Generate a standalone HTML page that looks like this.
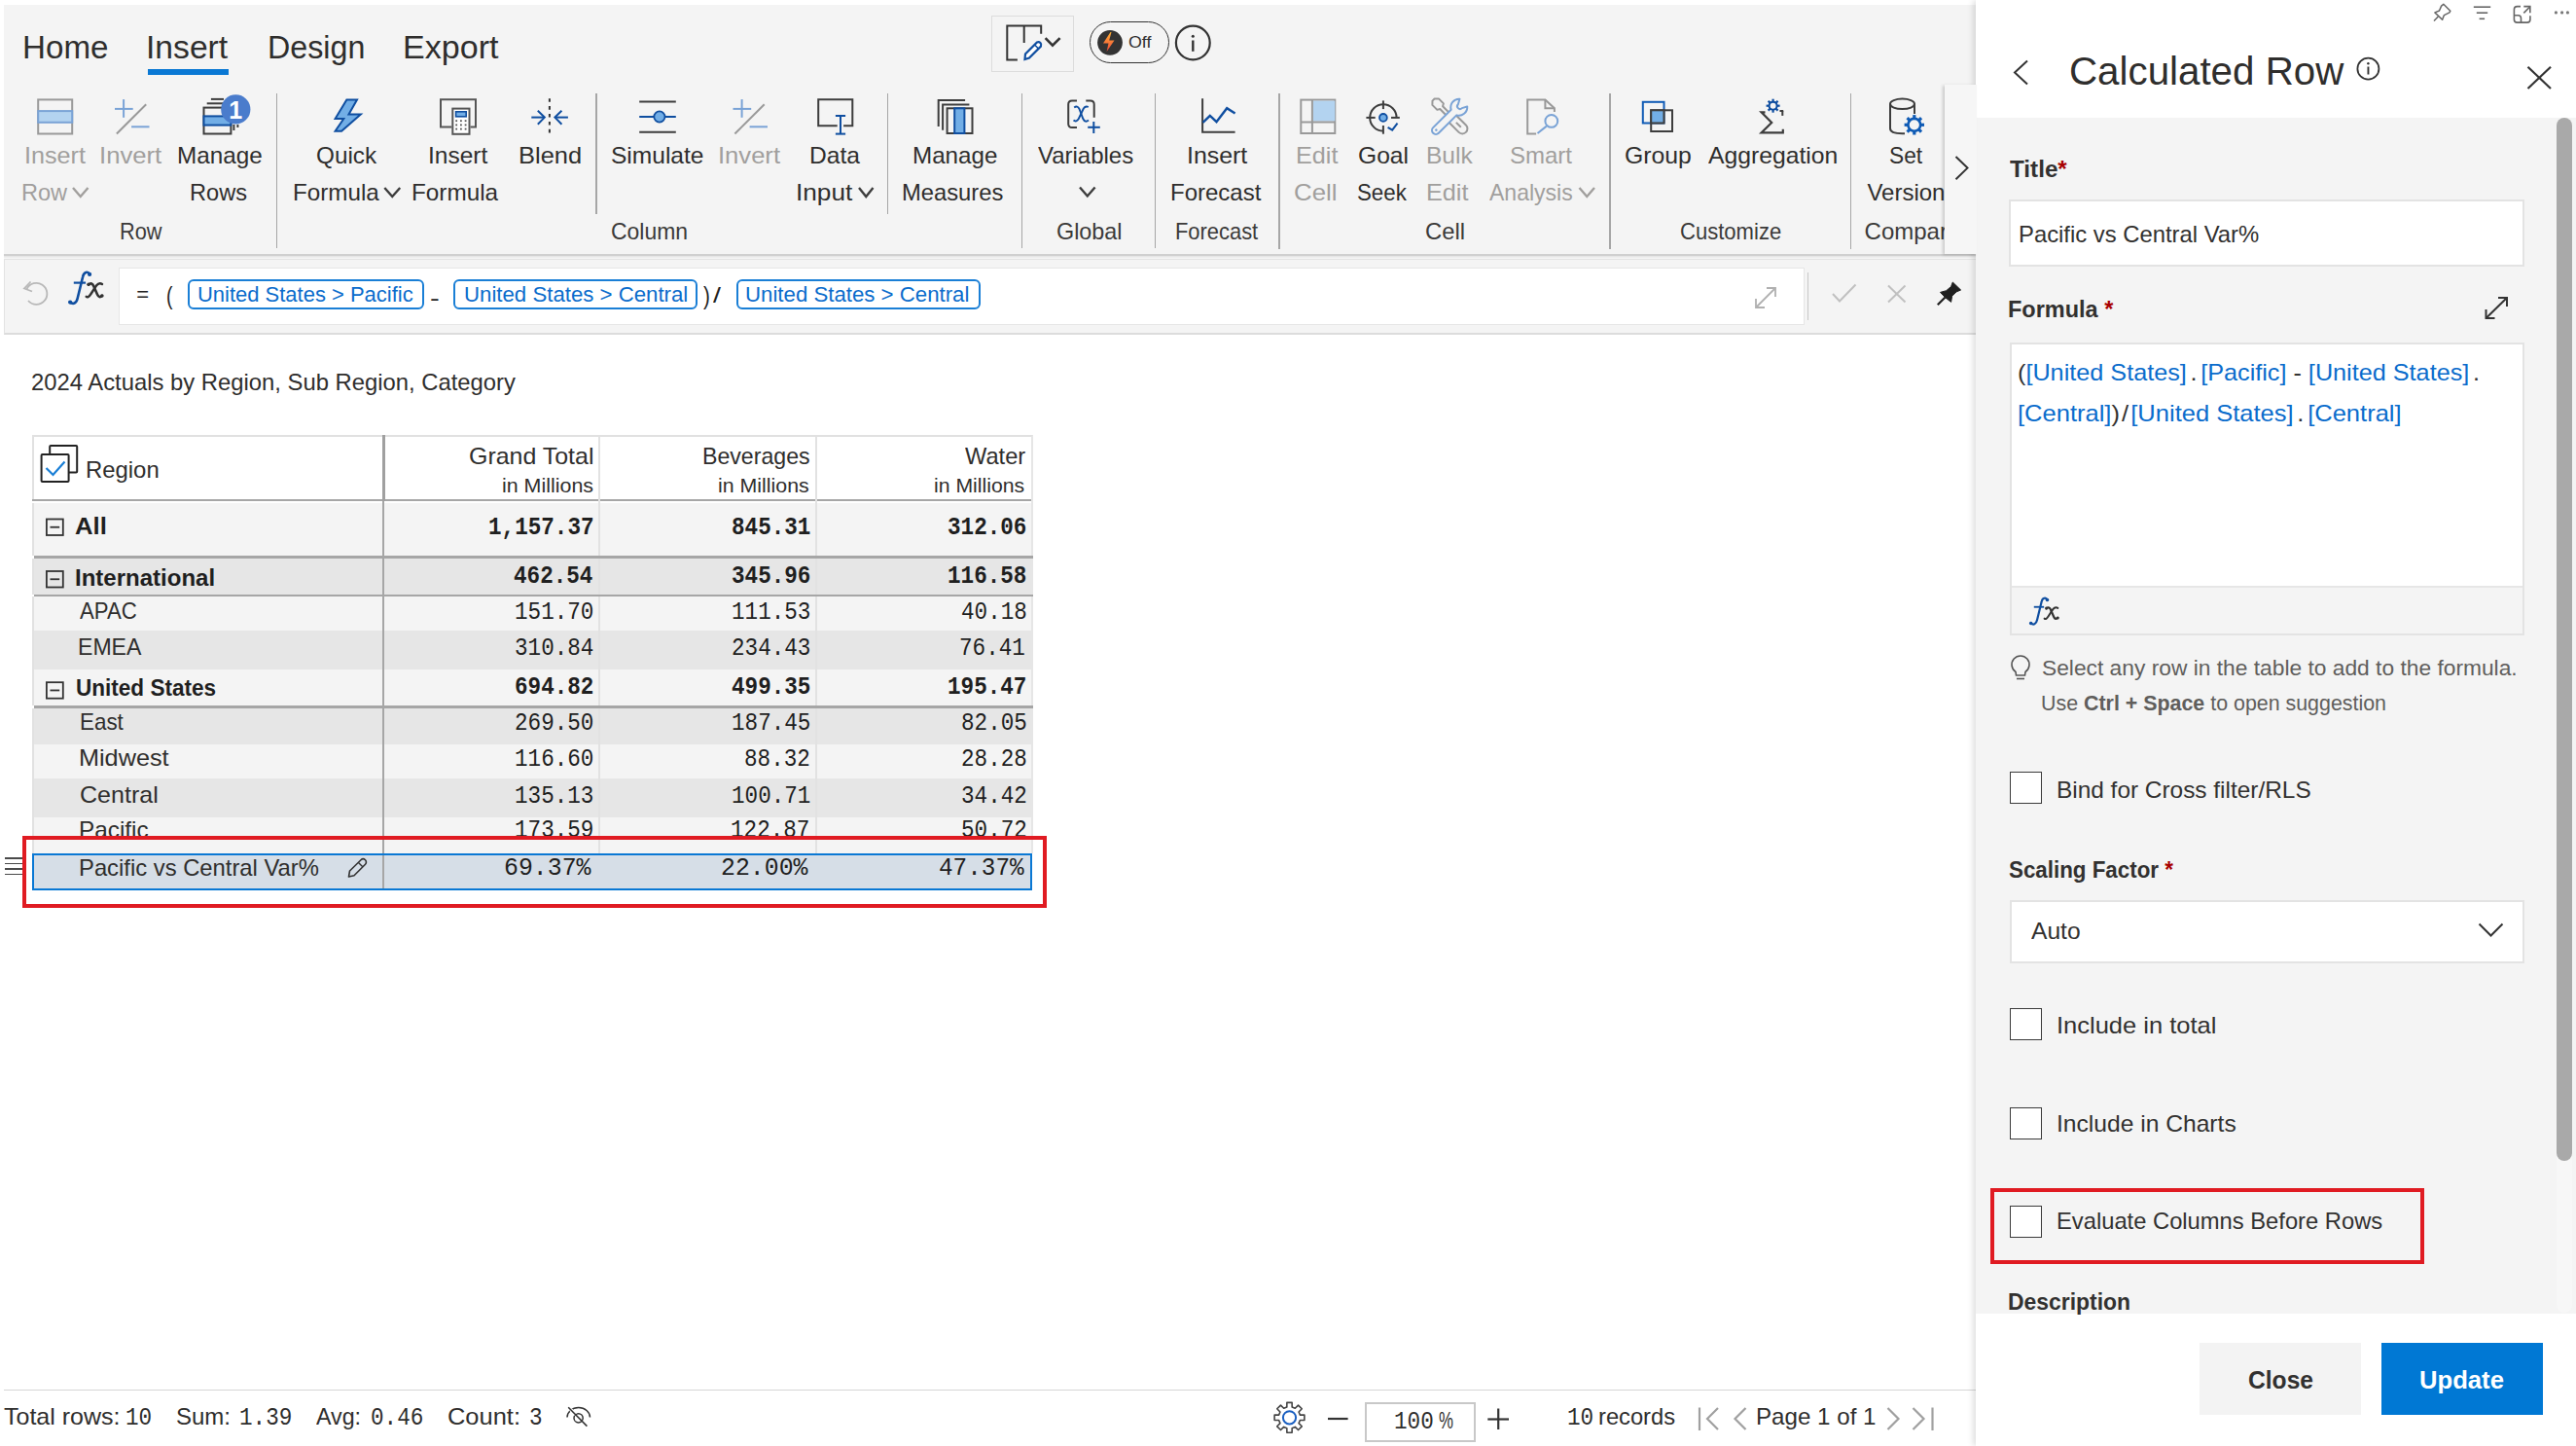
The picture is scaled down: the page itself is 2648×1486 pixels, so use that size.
<!DOCTYPE html>
<html><head><meta charset="utf-8"><title>Calculated Row</title>
<style>
html,body{margin:0;padding:0;width:2648px;height:1486px;overflow:hidden;background:#fff;position:relative;font-family:"Liberation Sans",sans-serif}
.t{position:absolute;white-space:nowrap;line-height:1;transform-origin:0 0}
svg{overflow:visible}
</style></head><body>
<div style="position:absolute;left:4px;top:5px;width:2028px;height:256px;background:#f4f4f4;"></div>
<div style="position:absolute;left:4px;top:261px;width:2028px;height:2px;background:#d0d0d0;"></div>
<div style="position:absolute;left:4px;top:263px;width:2028px;height:3px;background:linear-gradient(#e2e2e2,#fafafa);"></div>
<div style="position:absolute;left:4px;top:266px;width:2028px;height:78px;background:#f4f4f4;box-sizing:border-box;border:1px solid #e3e3e3;border-bottom:2px solid #dcdcdc"></div>
<div style="position:absolute;left:122px;top:275px;width:1733px;height:59px;background:#fff;box-sizing:border-box;border:1px solid #e6e6e6"></div>
<div style="position:absolute;left:1858px;top:280px;width:1px;height:49px;background:#c8c8c8;"></div>
<div style="position:absolute;left:4px;top:1428px;width:2027px;height:1px;background:#d6d6d6;"></div>
<div style="position:absolute;left:33px;top:447px;width:1029px;height:68px;background:#fff;box-sizing:border-box;border-top:2px solid #e1e1e1;border-left:2px solid #e1e1e1;border-right:2px solid #e8e8e8"></div>
<div style="position:absolute;left:33px;top:513.1px;width:1029px;height:2.4px;background:#a6a6a6;"></div>
<div style="position:absolute;left:33px;top:517.3px;width:1029px;height:53.90000000000009px;background:#f4f4f4;box-sizing:border-box;border-left:2px solid #e1e1e1"></div>
<div style="position:absolute;left:33px;top:573.8px;width:1029px;height:36.80000000000007px;background:#e6e6e6;box-sizing:border-box;border-left:2px solid #e1e1e1"></div>
<div style="position:absolute;left:33px;top:613.1px;width:1029px;height:35.19999999999993px;background:#f4f4f4;box-sizing:border-box;border-left:2px solid #e1e1e1"></div>
<div style="position:absolute;left:33px;top:648.3px;width:1029px;height:39.700000000000045px;background:#e6e6e6;box-sizing:border-box;border-left:2px solid #e1e1e1"></div>
<div style="position:absolute;left:33px;top:688px;width:1029px;height:37px;background:#f4f4f4;box-sizing:border-box;border-left:2px solid #e1e1e1"></div>
<div style="position:absolute;left:33px;top:727.5px;width:1029px;height:37.10000000000002px;background:#e6e6e6;box-sizing:border-box;border-left:2px solid #e1e1e1"></div>
<div style="position:absolute;left:33px;top:764.6px;width:1029px;height:35.39999999999998px;background:#f4f4f4;box-sizing:border-box;border-left:2px solid #e1e1e1"></div>
<div style="position:absolute;left:33px;top:800px;width:1029px;height:39.799999999999955px;background:#e6e6e6;box-sizing:border-box;border-left:2px solid #e1e1e1"></div>
<div style="position:absolute;left:33px;top:839.8px;width:1029px;height:37.200000000000045px;background:#f4f4f4;box-sizing:border-box;border-left:2px solid #e1e1e1"></div>
<div style="position:absolute;left:393px;top:447px;width:2.5px;height:68px;background:#a0a0a0;"></div>
<div style="position:absolute;left:393.2px;top:515px;width:1.8px;height:362px;background:#a6a6a6;"></div>
<div style="position:absolute;left:615px;top:449px;width:1.5px;height:428px;background:#e2e2e2;"></div>
<div style="position:absolute;left:838px;top:449px;width:1.5px;height:428px;background:#e2e2e2;"></div>
<div style="position:absolute;left:1060px;top:449px;width:2px;height:428px;background:#e6e6e6;"></div>
<div style="position:absolute;left:35px;top:571.2px;width:1027px;height:2.6px;background:#a6a6a6;"></div>
<div style="position:absolute;left:35px;top:610.6px;width:1027px;height:2.6px;background:#a6a6a6;"></div>
<div style="position:absolute;left:35px;top:725px;width:1027px;height:2.6px;background:#a6a6a6;"></div>
<div style="position:absolute;left:5px;top:881.2px;width:18px;height:1.4px;background:#4a4a4a;"></div>
<div style="position:absolute;left:5px;top:886.7px;width:18px;height:1.4px;background:#4a4a4a;"></div>
<div style="position:absolute;left:5px;top:892.2px;width:18px;height:1.4px;background:#4a4a4a;"></div>
<div style="position:absolute;left:5px;top:897.7px;width:18px;height:1.4px;background:#4a4a4a;"></div>
<div style="position:absolute;left:2031px;top:0px;width:617px;height:1486px;background:#fff;box-shadow:-3px 0 6px rgba(0,0,0,0.12)"></div>
<div style="position:absolute;left:2031px;top:121px;width:617px;height:1229px;background:#f4f4f4;"></div>
<div style="position:absolute;left:2628px;top:121px;width:16px;height:1228px;background:#f7f7f7;border-radius:8px"></div>
<div style="position:absolute;left:2628px;top:121px;width:16px;height:1072px;background:#a9a9a9;border-radius:8px"></div>
<div style="position:absolute;left:2065px;top:205px;width:530px;height:69px;background:#fff;box-sizing:border-box;border:2px solid #e3e3e3"></div>
<div style="position:absolute;left:2066px;top:351.5px;width:529px;height:301px;background:#fff;box-sizing:border-box;border:2px solid #e3e3e3"></div>
<div style="position:absolute;left:2068px;top:602px;width:525px;height:48.5px;background:#f4f4f4;box-sizing:border-box;border-top:2px solid #e6e6e6"></div>
<div style="position:absolute;left:2066px;top:793px;width:33px;height:33px;background:#fff;box-sizing:border-box;border:1.7px solid #3b3b3b"></div>
<div style="position:absolute;left:2066px;top:1036px;width:33px;height:33px;background:#fff;box-sizing:border-box;border:1.7px solid #3b3b3b"></div>
<div style="position:absolute;left:2066px;top:1137.5px;width:33px;height:33px;background:#fff;box-sizing:border-box;border:1.7px solid #3b3b3b"></div>
<div style="position:absolute;left:2066px;top:1238.5px;width:33px;height:33px;background:#fff;box-sizing:border-box;border:1.7px solid #3b3b3b"></div>
<div style="position:absolute;left:2066px;top:924.5px;width:528.5px;height:65px;background:#fff;box-sizing:border-box;border:2px solid #e3e3e3"></div>
<div style="position:absolute;left:2045.5px;top:1220.5px;width:446px;height:78.5px;background:transparent;box-sizing:border-box;border:4px solid #e01b22"></div>
<div style="position:absolute;left:2261px;top:1379.5px;width:166px;height:74px;background:#f3f3f3;"></div>
<div style="position:absolute;left:2448px;top:1379.5px;width:166px;height:74px;background:#0078d4;"></div>
<div style="position:absolute;left:1403px;top:1440.5px;width:114px;height:41px;background:#fff;box-sizing:border-box;border:2px solid #c8c8c8"></div>
<div style="position:absolute;left:1018.5px;top:16px;width:85px;height:57.5px;background:transparent;box-sizing:border-box;border:1.5px solid #dcdcdc"></div>
<div style="position:absolute;left:1119.5px;top:21.8px;width:82.2px;height:43.7px;background:transparent;box-sizing:border-box;border:1.6px solid #333;border-radius:23px"></div>
<div style="position:absolute;left:193px;top:286.5px;width:242.5px;height:31px;background:#fff;box-sizing:border-box;border:2px solid #1a7fd6;border-radius:6px"></div>
<div style="position:absolute;left:465.5px;top:286.5px;width:251.5px;height:31px;background:#fff;box-sizing:border-box;border:2px solid #1a7fd6;border-radius:6px"></div>
<div style="position:absolute;left:757px;top:286.5px;width:250.5px;height:31px;background:#fff;box-sizing:border-box;border:2px solid #1a7fd6;border-radius:6px"></div>
<div style="position:absolute;left:283.75px;top:96.4px;width:1.5px;height:158.6px;background:#a6a6a6;"></div>
<div style="position:absolute;left:612.05px;top:96.4px;width:1.5px;height:123.6px;background:#a6a6a6;"></div>
<div style="position:absolute;left:911.75px;top:96.4px;width:1.5px;height:123.6px;background:#a6a6a6;"></div>
<div style="position:absolute;left:1049.75px;top:96.4px;width:1.5px;height:158.6px;background:#a6a6a6;"></div>
<div style="position:absolute;left:1186.75px;top:96.4px;width:1.5px;height:158.6px;background:#a6a6a6;"></div>
<div style="position:absolute;left:1314.25px;top:96.4px;width:1.5px;height:159.6px;background:#a6a6a6;"></div>
<div style="position:absolute;left:1654.05px;top:96.4px;width:1.5px;height:159.6px;background:#a6a6a6;"></div>
<div style="position:absolute;left:1901.75px;top:96.4px;width:1.5px;height:159.6px;background:#a6a6a6;"></div>
<div style="position:absolute;left:152px;top:71px;width:83px;height:5.5px;background:#0a78d4;"></div>
<svg style="position:absolute;left:0;top:0" width="2648" height="1486" viewBox="0 0 2648 1486"><rect x="39.2" y="102.4" width="35" height="35.1" stroke="#999999" stroke-width="2" fill="none" rx="0"/><rect x="39.2" y="114.1" width="35" height="11.7" stroke="#7aa3d6" stroke-width="2" fill="#b3d3f0" rx="0"/><line x1="118" y1="111.9" x2="136.7" y2="111.9" stroke="#7aa3d6" stroke-width="2" stroke-linecap="butt"/><line x1="127.1" y1="102.1" x2="127.1" y2="120.8" stroke="#7aa3d6" stroke-width="2" stroke-linecap="butt"/><line x1="119.9" y1="137.5" x2="150.2" y2="107.2" stroke="#999999" stroke-width="2" stroke-linecap="butt"/><line x1="135.1" y1="130.3" x2="153.5" y2="130.3" stroke="#7aa3d6" stroke-width="2" stroke-linecap="butt"/><polyline points="216.9,101.9 230,101.9" stroke="#3d3d3d" stroke-width="2" fill="none" stroke-linejoin="miter" stroke-linecap="butt"/><polyline points="212.7,106.3 232,106.3" stroke="#3d3d3d" stroke-width="2" fill="none" stroke-linejoin="miter" stroke-linecap="butt"/><rect x="209.5" y="110.6" width="27.9" height="26.9" stroke="#3d3d3d" stroke-width="2" fill="none" rx="0"/><rect x="209.5" y="119.4" width="27.9" height="9.2" stroke="#0f4ea0" stroke-width="2" fill="#72aee6" rx="0"/><line x1="240.4" y1="128" x2="240.4" y2="134" stroke="#3d3d3d" stroke-width="2" stroke-linecap="butt"/><line x1="244.4" y1="128" x2="244.4" y2="131" stroke="#3d3d3d" stroke-width="2" stroke-linecap="butt"/><circle cx="242.3" cy="112.4" r="15.1" stroke="none" stroke-width="0" fill="#4a7ccc"/><text x="242.3" y="121.5" font-family="Liberation Sans" font-weight="bold" font-size="25" fill="#fff" text-anchor="middle">1</text><polygon points="356.4,102.6 367,102.6 358.5,117.6 370.8,117.6 351.1,134.8 344.6,134.8 353.3,122 344.6,122" stroke="#0f4ea0" stroke-width="2" fill="#72aee6" stroke-linejoin="miter" stroke-linecap="butt"/><polyline points="464.3,130.6 453,130.6 453,102.2 489,102.2 489,130.6 483.5,130.6" stroke="#555" stroke-width="2" fill="none" stroke-linejoin="miter" stroke-linecap="butt"/><rect x="465.3" y="111.6" width="17.2" height="26.2" stroke="#555" stroke-width="2" fill="#fff" rx="0"/><rect x="468.6" y="114.8" width="10.6" height="5" stroke="#0f4ea0" stroke-width="1.6" fill="#72aee6" rx="0"/><rect x="468.3" y="123.3" width="1.8" height="1.8" fill="#555"/><rect x="473.0" y="123.3" width="1.8" height="1.8" fill="#555"/><rect x="477.70000000000005" y="123.3" width="1.8" height="1.8" fill="#555"/><rect x="468.3" y="127.5" width="1.8" height="1.8" fill="#555"/><rect x="473.0" y="127.5" width="1.8" height="1.8" fill="#555"/><rect x="477.70000000000005" y="127.5" width="1.8" height="1.8" fill="#555"/><rect x="468.3" y="131.7" width="1.8" height="1.8" fill="#555"/><rect x="473.0" y="131.7" width="1.8" height="1.8" fill="#555"/><rect x="477.70000000000005" y="131.7" width="1.8" height="1.8" fill="#555"/><line x1="564.9" y1="101.2" x2="564.9" y2="138.5" stroke="#333" stroke-width="2" stroke-dasharray="3.6,4.3"/><line x1="546.3" y1="120.6" x2="559.5" y2="120.6" stroke="#0f4ea0" stroke-width="2" stroke-linecap="butt"/><polyline points="552.8,113.8 559.8,120.6 552.8,127.7" stroke="#0f4ea0" stroke-width="2" fill="none" stroke-linejoin="miter" stroke-linecap="butt"/><line x1="583.9" y1="120.6" x2="570.7" y2="120.6" stroke="#0f4ea0" stroke-width="2" stroke-linecap="butt"/><polyline points="577.4,113.8 570.4,120.6 577.4,127.7" stroke="#0f4ea0" stroke-width="2" fill="none" stroke-linejoin="miter" stroke-linecap="butt"/><line x1="657.2" y1="104.6" x2="694.8" y2="104.6" stroke="#3d3d3d" stroke-width="2" stroke-linecap="butt"/><line x1="657.2" y1="135.8" x2="694.8" y2="135.8" stroke="#3d3d3d" stroke-width="2" stroke-linecap="butt"/><line x1="657.2" y1="120" x2="694.8" y2="120" stroke="#0f4ea0" stroke-width="2" stroke-linecap="butt"/><circle cx="677.9" cy="120" r="5.6" stroke="#0f4ea0" stroke-width="1.8" fill="#72aee6"/><line x1="753.5" y1="111.9" x2="772.2" y2="111.9" stroke="#7aa3d6" stroke-width="2" stroke-linecap="butt"/><line x1="762.6" y1="102.1" x2="762.6" y2="120.8" stroke="#7aa3d6" stroke-width="2" stroke-linecap="butt"/><line x1="755.4" y1="137.5" x2="785.7" y2="107.2" stroke="#999999" stroke-width="2" stroke-linecap="butt"/><line x1="770.6" y1="130.3" x2="789" y2="130.3" stroke="#7aa3d6" stroke-width="2" stroke-linecap="butt"/><polyline points="860.7,129.3 841.2,129.3 841.2,102.2 876.3,102.2 876.3,129.3 867.1,129.3" stroke="#3d3d3d" stroke-width="2" fill="none" stroke-linejoin="miter" stroke-linecap="butt"/><line x1="864" y1="119.5" x2="864" y2="137.5" stroke="#0f4ea0" stroke-width="2" stroke-linecap="butt"/><line x1="858.9" y1="119" x2="869.1" y2="119" stroke="#0f4ea0" stroke-width="2" stroke-linecap="butt"/><line x1="858.9" y1="137.6" x2="869.1" y2="137.6" stroke="#0f4ea0" stroke-width="2" stroke-linecap="butt"/><polyline points="964.7,130 964.7,102.9 992.1,102.9" stroke="#3d3d3d" stroke-width="2" fill="none" stroke-linejoin="miter" stroke-linecap="butt"/><polyline points="969.1,133.8 969.1,107.6 996.4,107.6" stroke="#3d3d3d" stroke-width="2" fill="none" stroke-linejoin="miter" stroke-linecap="butt"/><rect x="973.6" y="111.3" width="25.9" height="25.7" stroke="#3d3d3d" stroke-width="2" fill="#f4f4f4" rx="0"/><rect x="981.2" y="111.3" width="10.2" height="25.7" stroke="#0f4ea0" stroke-width="2" fill="#72aee6" rx="0"/><path d="M1107,103.5 H1102 Q1098.2,103.5 1098.2,107.3 V127.2 Q1098.2,131 1102,131 H1107" stroke="#3d3d3d" stroke-width="2" fill="none" /><path d="M1116.3,103.5 H1120.9 Q1124.7,103.5 1124.7,107.3 V120.7" stroke="#3d3d3d" stroke-width="2" fill="none" /><path d="M1104.2,110.6 Q1107.5,108 1109.5,112 L1113.3,122 Q1115.5,126.5 1119,123.5" stroke="#0f4ea0" stroke-width="1.9" fill="none" /><path d="M1118.8,110 Q1115.8,108.6 1113.8,111.5 L1108.8,122 Q1106.5,126 1103.5,123.6" stroke="#0f4ea0" stroke-width="1.9" fill="none" /><line x1="1118.2" y1="130.8" x2="1130.8" y2="130.8" stroke="#0f4ea0" stroke-width="2" stroke-linecap="butt"/><line x1="1124.3" y1="125" x2="1124.3" y2="137" stroke="#0f4ea0" stroke-width="2" stroke-linecap="butt"/><polyline points="1110,192.5 1117.8,201.5 1125.6,192.5" stroke="#3d3d3d" stroke-width="2.4" fill="none" stroke-linejoin="miter" stroke-linecap="butt"/><polyline points="1236.1,101.2 1236.1,135.8 1269.6,135.8" stroke="#3d3d3d" stroke-width="2" fill="none" stroke-linejoin="miter" stroke-linecap="butt"/><polyline points="1236.6,125.9 1243.8,118.9 1250.5,125.2 1261.2,111.2 1269.6,116.6" stroke="#0f4ea0" stroke-width="2.4" fill="none" stroke-linejoin="miter" stroke-linecap="butt"/><rect x="1337.3" y="102.6" width="35" height="34.4" stroke="#999999" stroke-width="2" fill="none" rx="0"/><rect x="1349.9" y="103.6" width="22.4" height="20.9" fill="#b3d3f0"/><line x1="1348.9" y1="102.6" x2="1348.9" y2="137" stroke="#999999" stroke-width="2" stroke-linecap="butt"/><line x1="1337.3" y1="125.5" x2="1372.3" y2="125.5" stroke="#999999" stroke-width="2" stroke-linecap="butt"/><path d="M1421.9,107.2 A13.7,13.7 0 1 0 1421.9,134.6" stroke="#3d3d3d" stroke-width="2" fill="none" /><path d="M1421.9,107.2 A13.7,13.7 0 0 1 1435.6,120.9" stroke="#3d3d3d" stroke-width="2" fill="none" /><line x1="1421.9" y1="103.4" x2="1421.9" y2="112.1" stroke="#3d3d3d" stroke-width="2" stroke-linecap="butt"/><line x1="1404.4" y1="120.9" x2="1413.7" y2="120.9" stroke="#3d3d3d" stroke-width="2" stroke-linecap="butt"/><line x1="1430" y1="120.9" x2="1438.8" y2="120.9" stroke="#3d3d3d" stroke-width="2" stroke-linecap="butt"/><line x1="1421.9" y1="129" x2="1421.9" y2="137.7" stroke="#3d3d3d" stroke-width="2" stroke-linecap="butt"/><circle cx="1421.9" cy="120.9" r="3.9" stroke="#0f4ea0" stroke-width="1.8" fill="#72aee6"/><polyline points="1426.6,130.8 1431.2,133.7 1436.5,126.7" stroke="#0f4ea0" stroke-width="2" fill="none" stroke-linejoin="miter" stroke-linecap="butt"/><g transform="translate(1490.5,119.5) rotate(45)"><path d="M-1,-2 L-12.5,-2 L-14,-4.6 L-21,-4.6 L-24,-1.5 L-24,1.5 L-21,4.6 L-14,4.6 L-12.5,2 L-1,2" stroke="#999" stroke-width="2" fill="none" stroke-linejoin="round"/><path d="M3,-5.2 L18,-5.2 A5.2,5.2 0 0 1 18,5.2 L3,5.2 L-1,2" stroke="#999" stroke-width="2" fill="none" stroke-linejoin="round"/><line x1="9" y1="0" x2="16" y2="0" stroke="#999" stroke-width="2"/></g><g transform="translate(1490.5,119.5) rotate(-45)"><path d="M-20.5,-4 L5.6,-4 A8.6,8.6 0 0 1 19.6,-5.5 L14.6,-2.8 A2.8,2.8 0 0 0 14.6,2.8 L19.6,5.5 A8.6,8.6 0 0 1 5.6,4 L-20.5,4 A4,4 0 0 1 -20.5,-4 Z" stroke="#7aa3d6" stroke-width="2" fill="#f4f4f4" stroke-linejoin="round"/><circle cx="-20" cy="0" r="1.3" fill="#7aa3d6"/></g><polyline points="1579.1,137.5 1570.2,137.5 1570.2,102.6 1588.4,102.6 1597.9,111.2 1597.9,115" stroke="#999999" stroke-width="2" fill="none" stroke-linejoin="miter" stroke-linecap="butt"/><polyline points="1588.4,102.6 1588.4,111.2 1597.9,111.2" stroke="#999999" stroke-width="2" fill="none" stroke-linejoin="miter" stroke-linecap="butt"/><circle cx="1594.8" cy="124.4" r="6.4" stroke="#7aa3d6" stroke-width="2" fill="none"/><line x1="1589.8" y1="129.6" x2="1580.5" y2="137" stroke="#7aa3d6" stroke-width="2" stroke-linecap="butt"/><rect x="1688.8" y="104.8" width="21.7" height="21.7" stroke="#0f5bb5" stroke-width="2" fill="none" rx="0"/><rect x="1697.2" y="113.3" width="21.8" height="21.7" stroke="#3d3d3d" stroke-width="2" fill="none" rx="0"/><rect x="1697.2" y="113.3" width="13.3" height="13.2" fill="#72aee6" stroke="#3d3d3d" stroke-width="2"/><polyline points="1814.5,115.3 1810.6,115.3 1821.2,126.1 1810.6,136.4 1832.8,136.4 1832.8,132.7" stroke="#3d3d3d" stroke-width="2.2" fill="none" stroke-linejoin="miter" stroke-linecap="butt"/><line x1="1832.3" y1="114" x2="1832.3" y2="118.9" stroke="#3d3d3d" stroke-width="2" stroke-linecap="butt"/><line x1="1829.5" y1="114" x2="1833.2" y2="114" stroke="#3d3d3d" stroke-width="2" stroke-linecap="butt"/><circle cx="1822.6" cy="108.7" r="4.0" stroke="#0f4ea0" stroke-width="2" fill="none"/><line x1="1826.6" y1="108.7" x2="1829.6" y2="108.7" stroke="#0f4ea0" stroke-width="2.2" stroke-linecap="butt"/><line x1="1825.43" y1="111.53" x2="1827.55" y2="113.65" stroke="#0f4ea0" stroke-width="2.2" stroke-linecap="butt"/><line x1="1822.6" y1="112.7" x2="1822.6" y2="115.7" stroke="#0f4ea0" stroke-width="2.2" stroke-linecap="butt"/><line x1="1819.77" y1="111.53" x2="1817.65" y2="113.65" stroke="#0f4ea0" stroke-width="2.2" stroke-linecap="butt"/><line x1="1818.6" y1="108.7" x2="1815.6" y2="108.7" stroke="#0f4ea0" stroke-width="2.2" stroke-linecap="butt"/><line x1="1819.77" y1="105.87" x2="1817.65" y2="103.75" stroke="#0f4ea0" stroke-width="2.2" stroke-linecap="butt"/><line x1="1822.6" y1="104.7" x2="1822.6" y2="101.7" stroke="#0f4ea0" stroke-width="2.2" stroke-linecap="butt"/><line x1="1825.43" y1="105.87" x2="1827.55" y2="103.75" stroke="#0f4ea0" stroke-width="2.2" stroke-linecap="butt"/><ellipse cx="1955.5" cy="106.8" rx="12.5" ry="5.3" stroke="#3d3d3d" stroke-width="2" fill="none"/><path d="M1943,106.8 V132 Q1943,137.2 1955.5,137.2 H1958" stroke="#3d3d3d" stroke-width="2" fill="none" /><line x1="1968" y1="106.8" x2="1968" y2="117" stroke="#3d3d3d" stroke-width="2" stroke-linecap="butt"/><circle cx="1967.8" cy="128.3" r="6.4" stroke="#0f5bb5" stroke-width="2.6" fill="none"/><line x1="1974.2" y1="128.3" x2="1978.0" y2="128.3" stroke="#0f5bb5" stroke-width="3.2" stroke-linecap="butt"/><line x1="1972.33" y1="132.83" x2="1975.01" y2="135.51" stroke="#0f5bb5" stroke-width="3.2" stroke-linecap="butt"/><line x1="1967.8" y1="134.7" x2="1967.8" y2="138.5" stroke="#0f5bb5" stroke-width="3.2" stroke-linecap="butt"/><line x1="1963.27" y1="132.83" x2="1960.59" y2="135.51" stroke="#0f5bb5" stroke-width="3.2" stroke-linecap="butt"/><line x1="1961.4" y1="128.3" x2="1957.6" y2="128.3" stroke="#0f5bb5" stroke-width="3.2" stroke-linecap="butt"/><line x1="1963.27" y1="123.77" x2="1960.59" y2="121.09" stroke="#0f5bb5" stroke-width="3.2" stroke-linecap="butt"/><line x1="1967.8" y1="121.9" x2="1967.8" y2="118.1" stroke="#0f5bb5" stroke-width="3.2" stroke-linecap="butt"/><line x1="1972.33" y1="123.77" x2="1975.01" y2="121.09" stroke="#0f5bb5" stroke-width="3.2" stroke-linecap="butt"/><polyline points="75,193 82.75,202 90.5,193" stroke="#a19f9d" stroke-width="2.4" fill="none" stroke-linejoin="miter" stroke-linecap="butt"/><polyline points="395.3,193 403.25,202 411.2,193" stroke="#3d3d3d" stroke-width="2.4" fill="none" stroke-linejoin="miter" stroke-linecap="butt"/><polyline points="883,193 890.25,202 897.5,193" stroke="#3d3d3d" stroke-width="2.4" fill="none" stroke-linejoin="miter" stroke-linecap="butt"/><polyline points="1623.5,193 1631.25,202 1639,193" stroke="#a19f9d" stroke-width="2.4" fill="none" stroke-linejoin="miter" stroke-linecap="butt"/><polyline points="1045.9,61.5 1035.3,61.5 1035.3,26.5 1070.2,26.5 1070.2,34.7" stroke="#333" stroke-width="2" fill="none" stroke-linejoin="miter" stroke-linecap="butt"/><line x1="1052.7" y1="26.5" x2="1052.7" y2="44" stroke="#333" stroke-width="2" stroke-linecap="butt"/><path d="M1053.5,61 L1054,55.5 L1066,43.5 A3,3 0 0 1 1070,47.5 L1058,59.5 Z" stroke="#0f4ea0" stroke-width="2.2" fill="#fff" /><line x1="1063.5" y1="46" x2="1067.5" y2="50" stroke="#0f4ea0" stroke-width="1.6" stroke-linecap="butt"/><polyline points="1074.6,39.1 1082,46.6 1089.6,39.1" stroke="#333" stroke-width="2.6" fill="none" stroke-linejoin="miter" stroke-linecap="butt"/><circle cx="1141" cy="43.8" r="12.9" stroke="none" stroke-width="0" fill="#333"/><defs><linearGradient id="lg" x1="0" y1="0" x2="0" y2="1"><stop offset="0" stop-color="#ffb033"/><stop offset="1" stop-color="#f0483c"/></linearGradient></defs><polygon points="1141.5,33 1134,44.5 1139.5,44.5 1137.6,53 1145.5,41.5 1140.2,41.5 1142.5,33" stroke="none" stroke-width="0" fill="url(#lg)" stroke-linejoin="miter" stroke-linecap="butt"/><circle cx="1226.3" cy="44" r="17.4" stroke="#333" stroke-width="2.2" fill="none"/><rect x="1225.1" y="41.5" width="2.4" height="11.3" fill="#333"/><circle cx="1226.3" cy="37.2" r="1.5" fill="#333"/><path d="M27.5,297 A11,11 0 1 1 29,309" stroke="#b8b8b8" stroke-width="1.8" fill="none" /><polyline points="31.5,289.5 25,296.5 33,299.5" stroke="#b8b8b8" stroke-width="1.8" fill="none" stroke-linejoin="miter" stroke-linecap="butt"/><g transform="translate(69.5,279)"><path d="M22.6,3 C21,-0.6 16.5,0.2 15.6,5.5 L10.2,27.5 C9,33 5.5,34 2.5,31.5" stroke="#0f4ea0" stroke-width="2.6" fill="none" stroke-linecap="round"/><circle cx="22.6" cy="2.9" r="2.1" fill="#0f4ea0"/><circle cx="2.6" cy="31.6" r="2.1" fill="#0f4ea0"/><line x1="6.3" y1="11.6" x2="18.6" y2="11.6" stroke="#0f4ea0" stroke-width="2.2"/><path d="M21.5,13.6 Q25,10.5 27,15.5 L30.5,23.5 Q32.5,28 35.5,24.8" stroke="#333" stroke-width="2.6" fill="none" stroke-linecap="round"/><path d="M35.5,13 Q32.5,10.8 29.5,14.5 L24,23 Q21,27.5 19.2,25.8" stroke="#333" stroke-width="2.4" fill="none" stroke-linecap="round"/><circle cx="21.6" cy="13.2" r="1.8" fill="#333"/><circle cx="35.3" cy="25" r="1.8" fill="#333"/></g><line x1="1805" y1="316" x2="1825" y2="296" stroke="#b0b0b0" stroke-width="1.8" stroke-linecap="butt"/><polyline points="1805,307 1805,316 1814,316" stroke="#b0b0b0" stroke-width="1.8" fill="none" stroke-linejoin="miter" stroke-linecap="butt"/><polyline points="1816,296 1825,296 1825,305" stroke="#b0b0b0" stroke-width="1.8" fill="none" stroke-linejoin="miter" stroke-linecap="butt"/><polyline points="1884,302 1891,309.5 1907.5,292.5" stroke="#c0c0c0" stroke-width="2" fill="none" stroke-linejoin="miter" stroke-linecap="butt"/><line x1="1941" y1="293.5" x2="1958.5" y2="310.5" stroke="#c0c0c0" stroke-width="2" stroke-linecap="butt"/><line x1="1958.5" y1="293.5" x2="1941" y2="310.5" stroke="#c0c0c0" stroke-width="2" stroke-linecap="butt"/><polygon points="2007.3,290 2015.6,298 2011.1,299.9 2006.6,304.2 2005.6,310.4 1999.5,305.6 1994.5,300.4 2000.7,298.7 2005.6,294.5" fill="#1f1f1f" stroke="#1f1f1f" stroke-width="1" stroke-linejoin="round"/><line x1="1999.5" y1="305.5" x2="1991.8" y2="313.2" stroke="#1f1f1f" stroke-width="2.2" stroke-linecap="butt"/><polygon points="2511.8,4.3 2518.8,11.3 2517.9,12.9 2512.4,15.6 2510.6,20.2 2502.9,12.9 2507.5,11 2509.6,6.1" fill="none" stroke="#666" stroke-width="1.5" stroke-linejoin="round"/><line x1="2506.3" y1="16.9" x2="2502" y2="21.5" stroke="#666" stroke-width="1.5" stroke-linecap="butt"/><line x1="2542.8" y1="7.2" x2="2560.2" y2="7.2" stroke="#666" stroke-width="1.6" stroke-linecap="butt"/><line x1="2545.8" y1="13.2" x2="2557.2" y2="13.2" stroke="#666" stroke-width="1.6" stroke-linecap="butt"/><line x1="2548.6" y1="19.3" x2="2554.1" y2="19.3" stroke="#666" stroke-width="1.6" stroke-linecap="butt"/><path d="M2591,6.6 H2587.5 Q2584.4,6.6 2584.4,9.7 V20 Q2584.4,23.1 2587.5,23.1 H2597.8 Q2600.9,23.1 2600.9,20 V16.3" stroke="#666" stroke-width="1.6" fill="none" /><path d="M2584.4,15.8 H2588.5 Q2591.5,15.8 2591.5,18.8 V23.1" stroke="#666" stroke-width="1.6" fill="none" /><line x1="2594.3" y1="13.4" x2="2600.6" y2="7" stroke="#666" stroke-width="1.6" stroke-linecap="butt"/><polyline points="2594.3,6.6 2600.8,6.6 2600.8,13.2" stroke="#666" stroke-width="1.6" fill="none" stroke-linejoin="miter" stroke-linecap="butt"/><circle cx="2627.4" cy="12.9" r="1.6" stroke="none" stroke-width="0" fill="#777"/><circle cx="2633.6" cy="12.9" r="1.6" stroke="none" stroke-width="0" fill="#777"/><circle cx="2639.4" cy="12.9" r="1.6" stroke="none" stroke-width="0" fill="#777"/><polyline points="2084,62.5 2071,74.5 2084,86.5" stroke="#333" stroke-width="2" fill="none" stroke-linejoin="miter" stroke-linecap="butt"/><circle cx="2434.4" cy="70.7" r="11" stroke="#333" stroke-width="1.8" fill="none"/><rect x="2433.5" y="68.5" width="1.9" height="8" fill="#333"/><circle cx="2434.4" cy="65.2" r="1.2" fill="#333"/><line x1="2598.5" y1="68.8" x2="2622" y2="91" stroke="#333" stroke-width="2.2" stroke-linecap="butt"/><line x1="2622" y1="68.8" x2="2598.5" y2="91" stroke="#333" stroke-width="2.2" stroke-linecap="butt"/><line x1="2555.5" y1="327" x2="2577" y2="306" stroke="#333" stroke-width="2" stroke-linecap="butt"/><polyline points="2555.5,318 2555.5,327 2564.5,327" stroke="#333" stroke-width="2" fill="none" stroke-linejoin="miter" stroke-linecap="butt"/><polyline points="2568,306 2577,306 2577,315" stroke="#333" stroke-width="2" fill="none" stroke-linejoin="miter" stroke-linecap="butt"/><g transform="translate(2085.5,614) scale(0.84)"><path d="M22.6,3 C21,-0.6 16.5,0.2 15.6,5.5 L10.2,27.5 C9,33 5.5,34 2.5,31.5" stroke="#0f4ea0" stroke-width="2.6" fill="none" stroke-linecap="round"/><circle cx="22.6" cy="2.9" r="2.1" fill="#0f4ea0"/><circle cx="2.6" cy="31.6" r="2.1" fill="#0f4ea0"/><line x1="6.3" y1="11.6" x2="18.6" y2="11.6" stroke="#0f4ea0" stroke-width="2.2"/><path d="M21.5,13.6 Q25,10.5 27,15.5 L30.5,23.5 Q32.5,28 35.5,24.8" stroke="#333" stroke-width="2.6" fill="none" stroke-linecap="round"/><path d="M35.5,13 Q32.5,10.8 29.5,14.5 L24,23 Q21,27.5 19.2,25.8" stroke="#333" stroke-width="2.4" fill="none" stroke-linecap="round"/><circle cx="21.6" cy="13.2" r="1.8" fill="#333"/><circle cx="35.3" cy="25" r="1.8" fill="#333"/></g><path d="M2072,690.5 A9,9 0 1 1 2082,690.5 L2081.5,694 H2072.5 Z" stroke="#555" stroke-width="1.6" fill="none" /><line x1="2073" y1="697.5" x2="2081" y2="697.5" stroke="#555" stroke-width="1.6" stroke-linecap="butt"/><polyline points="2548.5,949.5 2560.5,961.5 2572.5,949.5" stroke="#333" stroke-width="2" fill="none" stroke-linejoin="miter" stroke-linecap="butt"/><rect x="51.2" y="457.9" width="28" height="27.5" fill="#fff" stroke="#222" stroke-width="2" rx="1"/><rect x="42.6" y="467.1" width="28" height="28" fill="#fff" stroke="#222" stroke-width="2" rx="1"/><polyline points="47.5,481 54.5,488 66.5,474.5" stroke="#1a7fd6" stroke-width="2.2" fill="none" stroke-linejoin="miter" stroke-linecap="butt"/><rect x="47.9" y="533.5" width="16.9" height="16.5" stroke="#333" stroke-width="1.8" fill="none" rx="0"/><line x1="51.5" y1="541.75" x2="61.2" y2="541.75" stroke="#333" stroke-width="1.8" stroke-linecap="butt"/><rect x="47.9" y="587" width="16.9" height="16.5" stroke="#333" stroke-width="1.8" fill="none" rx="0"/><line x1="51.5" y1="595.25" x2="61.2" y2="595.25" stroke="#333" stroke-width="1.8" stroke-linecap="butt"/><rect x="47.9" y="701.2" width="16.9" height="16.5" stroke="#333" stroke-width="1.8" fill="none" rx="0"/><line x1="51.5" y1="709.45" x2="61.2" y2="709.45" stroke="#333" stroke-width="1.8" stroke-linecap="butt"/><polygon points="1336.38,1454.14 1340.88,1454.16 1340.88,1459.44 1336.38,1459.46 1335.08,1462.61 1338.24,1465.81 1334.51,1469.54 1331.31,1466.38 1328.16,1467.68 1328.14,1472.18 1322.86,1472.18 1322.84,1467.68 1319.69,1466.38 1316.49,1469.54 1312.76,1465.81 1315.92,1462.61 1314.62,1459.46 1310.12,1459.44 1310.12,1454.16 1314.62,1454.14 1315.92,1450.99 1312.76,1447.79 1316.49,1444.06 1319.69,1447.22 1322.84,1445.92 1322.86,1441.42 1328.14,1441.42 1328.16,1445.92 1331.31,1447.22 1334.51,1444.06 1338.24,1447.79 1335.08,1450.99" fill="none" stroke="#444" stroke-width="1.6" stroke-linejoin="round"/><circle cx="1325.5" cy="1456.8" r="6.6" stroke="#1a5fc0" stroke-width="2" fill="none"/><line x1="1365" y1="1458" x2="1385.6" y2="1458" stroke="#333" stroke-width="2.2" stroke-linecap="butt"/><line x1="1529.3" y1="1458.5" x2="1551" y2="1458.5" stroke="#333" stroke-width="2.2" stroke-linecap="butt"/><line x1="1540.2" y1="1447.5" x2="1540.2" y2="1469" stroke="#333" stroke-width="2.2" stroke-linecap="butt"/><line x1="1747" y1="1446.5" x2="1747" y2="1470" stroke="#a0a0a0" stroke-width="2.2" stroke-linecap="butt"/><polyline points="1766,1447 1755,1458 1766,1469" stroke="#a0a0a0" stroke-width="2.2" fill="none" stroke-linejoin="miter" stroke-linecap="butt"/><polyline points="1794.5,1447 1783.5,1458 1794.5,1469" stroke="#a0a0a0" stroke-width="2.2" fill="none" stroke-linejoin="miter" stroke-linecap="butt"/><polyline points="1940.5,1447 1951.5,1458 1940.5,1469" stroke="#a0a0a0" stroke-width="2.2" fill="none" stroke-linejoin="miter" stroke-linecap="butt"/><polyline points="1966.5,1447 1977.5,1458 1966.5,1469" stroke="#a0a0a0" stroke-width="2.2" fill="none" stroke-linejoin="miter" stroke-linecap="butt"/><line x1="1986.5" y1="1446.5" x2="1986.5" y2="1470" stroke="#a0a0a0" stroke-width="2.2" stroke-linecap="butt"/><path d="M583,1456.6 A11.75,10 0 0 1 606.5,1456.6" stroke="#333" stroke-width="1.5" fill="none" /><circle cx="594.6" cy="1457.3" r="4.6" stroke="#333" stroke-width="1.5" fill="none"/><line x1="586.5" y1="1448.6" x2="591.5" y2="1453.6" stroke="#fff" stroke-width="3.5" stroke-linecap="butt"/><line x1="584.2" y1="1446.3" x2="603.4" y2="1465.6" stroke="#333" stroke-width="1.5" stroke-linecap="butt"/></svg>
<div id="tab_home" class="t" style="left:22.63px;top:31.79px;font-family:'Liberation Sans', sans-serif;font-size:33px;font-weight:normal;color:#2f2e2d;transform:scaleX(1.0049);">Home</div>
<div id="tab_ins" class="t" style="left:150.21px;top:31.79px;font-family:'Liberation Sans', sans-serif;font-size:33px;font-weight:normal;color:#2f2e2d;transform:scaleX(1.0194);">Insert</div>
<div id="tab_des" class="t" style="left:275.30px;top:31.79px;font-family:'Liberation Sans', sans-serif;font-size:33px;font-weight:normal;color:#2f2e2d;transform:scaleX(0.9766);">Design</div>
<div id="tab_exp" class="t" style="left:414.16px;top:31.79px;font-family:'Liberation Sans', sans-serif;font-size:33px;font-weight:normal;color:#2f2e2d;transform:scaleX(1.0324);">Export</div>
<div id="r_ins1" class="t" style="left:24.70px;top:148.07px;font-family:'Liberation Sans', sans-serif;font-size:24px;font-weight:normal;color:#a19f9d;transform:scaleX(1.0488);">Insert</div>
<div id="r_ins2" class="t" style="left:22.04px;top:186.07px;font-family:'Liberation Sans', sans-serif;font-size:24px;font-weight:normal;color:#a19f9d;transform:scaleX(0.9813);">Row</div>
<div id="r_inv1" class="t" style="left:101.86px;top:148.07px;font-family:'Liberation Sans', sans-serif;font-size:24px;font-weight:normal;color:#a19f9d;transform:scaleX(1.0690);">Invert</div>
<div id="r_man1" class="t" style="left:181.98px;top:148.07px;font-family:'Liberation Sans', sans-serif;font-size:24px;font-weight:normal;color:#2f2e2d;transform:scaleX(1.0119);">Manage</div>
<div id="r_man2" class="t" style="left:195.04px;top:186.07px;font-family:'Liberation Sans', sans-serif;font-size:24px;font-weight:normal;color:#2f2e2d;transform:scaleX(0.9825);">Rows</div>
<div id="r_qf1" class="t" style="left:325.20px;top:148.07px;font-family:'Liberation Sans', sans-serif;font-size:24px;font-weight:normal;color:#2f2e2d;transform:scaleX(1.0119);">Quick</div>
<div id="r_qf2" class="t" style="left:300.57px;top:186.07px;font-family:'Liberation Sans', sans-serif;font-size:24px;font-weight:normal;color:#2f2e2d;transform:scaleX(1.0084);">Formula</div>
<div id="r_if1" class="t" style="left:439.57px;top:148.07px;font-family:'Liberation Sans', sans-serif;font-size:24px;font-weight:normal;color:#2f2e2d;transform:scaleX(1.0195);">Insert</div>
<div id="r_if2" class="t" style="left:423.38px;top:186.07px;font-family:'Liberation Sans', sans-serif;font-size:24px;font-weight:normal;color:#2f2e2d;transform:scaleX(1.0116);">Formula</div>
<div id="r_bl" class="t" style="left:532.88px;top:148.07px;font-family:'Liberation Sans', sans-serif;font-size:24px;font-weight:normal;color:#2f2e2d;transform:scaleX(1.0609);">Blend</div>
<div id="r_sim" class="t" style="left:627.98px;top:148.07px;font-family:'Liberation Sans', sans-serif;font-size:24px;font-weight:normal;color:#2f2e2d;transform:scaleX(1.0220);">Simulate</div>
<div id="r_inv2" class="t" style="left:737.87px;top:148.07px;font-family:'Liberation Sans', sans-serif;font-size:24px;font-weight:normal;color:#a19f9d;transform:scaleX(1.0661);">Invert</div>
<div id="r_di1" class="t" style="left:831.55px;top:148.07px;font-family:'Liberation Sans', sans-serif;font-size:24px;font-weight:normal;color:#2f2e2d;transform:scaleX(1.0240);">Data</div>
<div id="r_di2" class="t" style="left:817.82px;top:186.07px;font-family:'Liberation Sans', sans-serif;font-size:24px;font-weight:normal;color:#2f2e2d;transform:scaleX(1.0906);">Input</div>
<div id="r_mm1" class="t" style="left:937.57px;top:148.07px;font-family:'Liberation Sans', sans-serif;font-size:24px;font-weight:normal;color:#2f2e2d;transform:scaleX(1.0076);">Manage</div>
<div id="r_mm2" class="t" style="left:927.02px;top:186.07px;font-family:'Liberation Sans', sans-serif;font-size:24px;font-weight:normal;color:#2f2e2d;transform:scaleX(0.9903);">Measures</div>
<div id="r_var" class="t" style="left:1067.00px;top:148.07px;font-family:'Liberation Sans', sans-serif;font-size:24px;font-weight:normal;color:#2f2e2d;transform:scaleX(0.9992);">Variables</div>
<div id="r_fc1" class="t" style="left:1219.51px;top:148.07px;font-family:'Liberation Sans', sans-serif;font-size:24px;font-weight:normal;color:#2f2e2d;transform:scaleX(1.0367);">Insert</div>
<div id="r_fc2" class="t" style="left:1202.80px;top:186.07px;font-family:'Liberation Sans', sans-serif;font-size:24px;font-weight:normal;color:#2f2e2d;transform:scaleX(1.0001);">Forecast</div>
<div id="r_ec1" class="t" style="left:1331.90px;top:148.07px;font-family:'Liberation Sans', sans-serif;font-size:24px;font-weight:normal;color:#a19f9d;transform:scaleX(1.0498);">Edit</div>
<div id="r_ec2" class="t" style="left:1330.32px;top:186.07px;font-family:'Liberation Sans', sans-serif;font-size:24px;font-weight:normal;color:#a19f9d;transform:scaleX(1.0754);">Cell</div>
<div id="r_gs1" class="t" style="left:1396.38px;top:148.07px;font-family:'Liberation Sans', sans-serif;font-size:24px;font-weight:normal;color:#2f2e2d;transform:scaleX(1.0258);">Goal</div>
<div id="r_gs2" class="t" style="left:1395.07px;top:186.07px;font-family:'Liberation Sans', sans-serif;font-size:24px;font-weight:normal;color:#2f2e2d;transform:scaleX(0.9285);">Seek</div>
<div id="r_be1" class="t" style="left:1465.97px;top:148.07px;font-family:'Liberation Sans', sans-serif;font-size:24px;font-weight:normal;color:#a19f9d;transform:scaleX(1.0222);">Bulk</div>
<div id="r_be2" class="t" style="left:1465.90px;top:186.07px;font-family:'Liberation Sans', sans-serif;font-size:24px;font-weight:normal;color:#a19f9d;transform:scaleX(1.0513);">Edit</div>
<div id="r_sa1" class="t" style="left:1552.19px;top:148.07px;font-family:'Liberation Sans', sans-serif;font-size:24px;font-weight:normal;color:#a19f9d;transform:scaleX(1.0003);">Smart</div>
<div id="r_sa2" class="t" style="left:1531.42px;top:186.07px;font-family:'Liberation Sans', sans-serif;font-size:24px;font-weight:normal;color:#a19f9d;transform:scaleX(0.9593);">Analysis</div>
<div id="r_grp" class="t" style="left:1669.97px;top:148.07px;font-family:'Liberation Sans', sans-serif;font-size:24px;font-weight:normal;color:#2f2e2d;transform:scaleX(1.0308);">Group</div>
<div id="r_agg" class="t" style="left:1756.00px;top:148.07px;font-family:'Liberation Sans', sans-serif;font-size:24px;font-weight:normal;color:#2f2e2d;transform:scaleX(1.0298);">Aggregation</div>
<div id="r_sv1" class="t" style="left:1942.27px;top:148.07px;font-family:'Liberation Sans', sans-serif;font-size:24px;font-weight:normal;color:#2f2e2d;transform:scaleX(0.9464);">Set</div>
<div id="g_row" class="t" style="left:123.15px;top:226.07px;font-family:'Liberation Sans', sans-serif;font-size:24px;font-weight:normal;color:#3b3a39;transform:scaleX(0.9061);">Row</div>
<div id="g_col" class="t" style="left:628.43px;top:226.07px;font-family:'Liberation Sans', sans-serif;font-size:24px;font-weight:normal;color:#3b3a39;transform:scaleX(0.9559);">Column</div>
<div id="g_glob" class="t" style="left:1086.03px;top:226.07px;font-family:'Liberation Sans', sans-serif;font-size:24px;font-weight:normal;color:#3b3a39;transform:scaleX(0.9736);">Global</div>
<div id="g_fc" class="t" style="left:1208.18px;top:226.07px;font-family:'Liberation Sans', sans-serif;font-size:24px;font-weight:normal;color:#3b3a39;transform:scaleX(0.9121);">Forecast</div>
<div id="g_cell" class="t" style="left:1464.83px;top:226.07px;font-family:'Liberation Sans', sans-serif;font-size:24px;font-weight:normal;color:#3b3a39;transform:scaleX(0.9912);">Cell</div>
<div id="g_cust" class="t" style="left:1726.50px;top:226.07px;font-family:'Liberation Sans', sans-serif;font-size:24px;font-weight:normal;color:#3b3a39;transform:scaleX(0.9189);">Customize</div>
<div id="r_sv2" class="t" style="left:1919.40px;top:186.07px;font-family:'Liberation Sans', sans-serif;font-size:24px;font-weight:normal;color:#2f2e2d;transform:scaleX(1.0000);">Version</div>
<div id="g_cmp" class="t" style="left:1916.60px;top:226.07px;font-family:'Liberation Sans', sans-serif;font-size:24px;font-weight:normal;color:#3b3a39;transform:scaleX(1.0000);">Compare</div>
<div id="off" class="t" style="left:1159.56px;top:35.38px;font-family:'Liberation Sans', sans-serif;font-size:17px;font-weight:normal;color:#2f2e2d;transform:scaleX(1.0455);">Off</div>
<div id="fb_eq" class="t" style="left:140.17px;top:291.73px;font-family:'Liberation Sans', sans-serif;font-size:22px;font-weight:normal;color:#222;transform:scaleX(1.0000);">=</div>
<div id="fb_lp" class="t" style="left:171.44px;top:292.24px;font-family:'Liberation Sans', sans-serif;font-size:25px;font-weight:normal;color:#222;transform:scaleX(0.7790);">(</div>
<div id="fb_c1" class="t" style="left:202.56px;top:292.03px;font-family:'Liberation Sans', sans-serif;font-size:22px;font-weight:normal;color:#0a6ccc;transform:scaleX(0.9987);">United States &gt; Pacific</div>
<div id="fb_mn" class="t" style="left:441.89px;top:295.73px;font-family:'Liberation Sans', sans-serif;font-size:22px;font-weight:normal;color:#222;transform:scaleX(1.3333);">-</div>
<div id="fb_c2" class="t" style="left:476.55px;top:292.03px;font-family:'Liberation Sans', sans-serif;font-size:22px;font-weight:normal;color:#0a6ccc;transform:scaleX(1.0098);">United States &gt; Central</div>
<div id="fb_rp" class="t" style="left:723.42px;top:292.24px;font-family:'Liberation Sans', sans-serif;font-size:25px;font-weight:normal;color:#222;transform:scaleX(0.8195);">)</div>
<div id="fb_sl" class="t" style="left:733.05px;top:292.73px;font-family:'Liberation Sans', sans-serif;font-size:22px;font-weight:normal;color:#222;transform:scaleX(1.2979);">/</div>
<div id="fb_c3" class="t" style="left:766.15px;top:292.03px;font-family:'Liberation Sans', sans-serif;font-size:22px;font-weight:normal;color:#0a6ccc;transform:scaleX(1.0102);">United States &gt; Central</div>
<div id="tt" class="t" style="left:32.21px;top:380.87px;font-family:'Liberation Sans', sans-serif;font-size:24px;font-weight:normal;color:#2f2e2d;transform:scaleX(0.9924);">2024 Actuals by Region, Sub Region, Category</div>
<div id="h_reg" class="t" style="left:87.63px;top:471.07px;font-family:'Liberation Sans', sans-serif;font-size:24px;font-weight:normal;color:#2f2e2d;transform:scaleX(0.9949);">Region</div>
<div id="h_gt" class="t" style="left:482.13px;top:456.57px;font-family:'Liberation Sans', sans-serif;font-size:24px;font-weight:normal;color:#2f2e2d;transform:scaleX(1.0390);">Grand Total</div>
<div id="h_gt2" class="t" style="left:515.83px;top:489.19px;font-family:'Liberation Sans', sans-serif;font-size:20px;font-weight:normal;color:#2f2e2d;transform:scaleX(1.0711);">in Millions</div>
<div id="h_bev" class="t" style="left:721.69px;top:456.57px;font-family:'Liberation Sans', sans-serif;font-size:24px;font-weight:normal;color:#2f2e2d;transform:scaleX(0.9635);">Beverages</div>
<div id="h_bev2" class="t" style="left:738.21px;top:489.19px;font-family:'Liberation Sans', sans-serif;font-size:20px;font-weight:normal;color:#2f2e2d;transform:scaleX(1.0677);">in Millions</div>
<div id="h_wat" class="t" style="left:991.59px;top:456.57px;font-family:'Liberation Sans', sans-serif;font-size:24px;font-weight:normal;color:#2f2e2d;transform:scaleX(0.9862);">Water</div>
<div id="h_wat2" class="t" style="left:960.41px;top:489.19px;font-family:'Liberation Sans', sans-serif;font-size:20px;font-weight:normal;color:#2f2e2d;transform:scaleX(1.0617);">in Millions</div>
<div id="l_all" class="t" style="left:77.30px;top:529.07px;font-family:'Liberation Sans', sans-serif;font-size:24px;font-weight:bold;color:#1f1f1f;transform:scaleX(1.0700);">All</div>
<div id="l_intl" class="t" style="left:76.59px;top:581.77px;font-family:'Liberation Sans', sans-serif;font-size:24px;font-weight:bold;color:#1f1f1f;transform:scaleX(1.0008);">International</div>
<div id="l_apac" class="t" style="left:82.42px;top:616.07px;font-family:'Liberation Sans', sans-serif;font-size:24px;font-weight:normal;color:#2f2e2d;transform:scaleX(0.9231);">APAC</div>
<div id="l_emea" class="t" style="left:80.48px;top:653.07px;font-family:'Liberation Sans', sans-serif;font-size:24px;font-weight:normal;color:#2f2e2d;transform:scaleX(0.9609);">EMEA</div>
<div id="l_us" class="t" style="left:77.50px;top:694.57px;font-family:'Liberation Sans', sans-serif;font-size:24px;font-weight:bold;color:#1f1f1f;transform:scaleX(0.9392);">United States</div>
<div id="l_east" class="t" style="left:81.51px;top:730.07px;font-family:'Liberation Sans', sans-serif;font-size:24px;font-weight:normal;color:#2f2e2d;transform:scaleX(0.9335);">East</div>
<div id="l_mid" class="t" style="left:81.31px;top:767.27px;font-family:'Liberation Sans', sans-serif;font-size:24px;font-weight:normal;color:#2f2e2d;transform:scaleX(1.0513);">Midwest</div>
<div id="l_cen" class="t" style="left:82.37px;top:804.67px;font-family:'Liberation Sans', sans-serif;font-size:24px;font-weight:normal;color:#2f2e2d;transform:scaleX(1.0430);">Central</div>
<div id="l_pac" class="t" style="left:81.37px;top:841.07px;font-family:'Liberation Sans', sans-serif;font-size:24px;font-weight:normal;color:#2f2e2d;transform:scaleX(1.0136);">Pacific</div>
<div id="sb1" class="t" style="left:4.18px;top:1443.77px;font-family:'Liberation Sans', sans-serif;font-size:24px;font-weight:normal;color:#2f2e2d;transform:scaleX(1.0420);">Total rows:</div>
<div id="sb1n" class="t" style="left:128.90px;top:1443.78px;font-family:'Liberation Mono', monospace;font-size:26px;font-weight:normal;color:#2f2e2d;transform:scaleX(0.8700);">10</div>
<div id="sb2" class="t" style="left:181.00px;top:1443.77px;font-family:'Liberation Sans', sans-serif;font-size:24px;font-weight:normal;color:#2f2e2d;transform:scaleX(1.0000);">Sum:</div>
<div id="sb2n" class="t" style="left:245.58px;top:1443.78px;font-family:'Liberation Mono', monospace;font-size:26px;font-weight:normal;color:#2f2e2d;transform:scaleX(0.8700);">1.39</div>
<div id="sb3" class="t" style="left:325.05px;top:1443.77px;font-family:'Liberation Sans', sans-serif;font-size:24px;font-weight:normal;color:#2f2e2d;transform:scaleX(0.9679);">Avg:</div>
<div id="sb3n" class="t" style="left:381.01px;top:1443.78px;font-family:'Liberation Mono', monospace;font-size:26px;font-weight:normal;color:#2f2e2d;transform:scaleX(0.8700);">0.46</div>
<div id="sb4" class="t" style="left:459.71px;top:1443.77px;font-family:'Liberation Sans', sans-serif;font-size:24px;font-weight:normal;color:#2f2e2d;transform:scaleX(1.0599);">Count:</div>
<div id="sb4n" class="t" style="left:543.84px;top:1443.78px;font-family:'Liberation Mono', monospace;font-size:26px;font-weight:normal;color:#2f2e2d;transform:scaleX(0.8700);">3</div>
<div id="zm_n" class="t" style="left:1433.22px;top:1448.08px;font-family:'Liberation Mono', monospace;font-size:26px;font-weight:normal;color:#2f2e2d;transform:scaleX(0.8700);">100</div>
<div id="zm_p" class="t" style="left:1478.97px;top:1448.07px;font-family:'Liberation Sans', sans-serif;font-size:24px;font-weight:normal;color:#2f2e2d;transform:scaleX(0.7000);">%</div>
<div id="rec_n" class="t" style="left:1610.75px;top:1443.58px;font-family:'Liberation Mono', monospace;font-size:26px;font-weight:normal;color:#2f2e2d;transform:scaleX(0.8700);">10</div>
<div id="rec" class="t" style="left:1643.03px;top:1443.57px;font-family:'Liberation Sans', sans-serif;font-size:24px;font-weight:normal;color:#2f2e2d;transform:scaleX(0.9870);">records</div>
<div id="page" class="t" style="left:1804.58px;top:1443.57px;font-family:'Liberation Sans', sans-serif;font-size:24px;font-weight:normal;color:#2f2e2d;transform:scaleX(1.0059);">Page 1 of 1</div>
<div id="p_title" class="t" style="left:2127.26px;top:53.38px;font-family:'Liberation Sans', sans-serif;font-size:40px;font-weight:normal;color:#2f2e2d;transform:scaleX(1.0076);">Calculated Row</div>
<div id="p_t" class="t" style="left:2066.29px;top:161.77px;font-family:'Liberation Sans', sans-serif;font-size:24px;font-weight:bold;color:#323130;transform:scaleX(1.0093);">Title<span style="color:#a80000">*</span></div>
<div id="p_tv" class="t" style="left:2075.42px;top:229.37px;font-family:'Liberation Sans', sans-serif;font-size:24px;font-weight:normal;color:#323130;transform:scaleX(0.9927);">Pacific vs Central Var%</div>
<div id="p_f" class="t" style="left:2064.42px;top:305.67px;font-family:'Liberation Sans', sans-serif;font-size:24px;font-weight:bold;color:#323130;transform:scaleX(0.9784);">Formula <span style="color:#a80000">*</span></div>
<div id="p_l1" class="t" style="left:2073.97px;top:371.07px;font-family:'Liberation Sans', sans-serif;font-size:24px;font-weight:normal;color:#323130;transform:scaleX(1.0507);">(<span style="color:#0a6ccc">[United States]</span><span style="margin:0 3.5px">.</span><span style="color:#0a6ccc">[Pacific]</span> - <span style="color:#0a6ccc">[United States]</span><span style="margin:0 3.5px">.</span></div>
<div id="p_l2" class="t" style="left:2073.87px;top:412.67px;font-family:'Liberation Sans', sans-serif;font-size:24px;font-weight:normal;color:#323130;transform:scaleX(1.0631);"><span style="color:#0a6ccc">[Central]</span>)<span style="margin:0 2px">/</span><span style="color:#0a6ccc">[United States]</span><span style="margin:0 3.5px">.</span><span style="color:#0a6ccc">[Central]</span></div>
<div id="p_h1" class="t" style="left:2099.14px;top:676.23px;font-family:'Liberation Sans', sans-serif;font-size:22px;font-weight:normal;color:#605e5c;transform:scaleX(1.0352);">Select any row in the table to add to the formula.</div>
<div id="p_h2" class="t" style="left:2098.22px;top:711.73px;font-family:'Liberation Sans', sans-serif;font-size:22px;font-weight:normal;color:#605e5c;transform:scaleX(0.9724);">Use <b>Ctrl + Space</b> to open suggestion</div>
<div id="p_bind" class="t" style="left:2114.17px;top:800.07px;font-family:'Liberation Sans', sans-serif;font-size:24px;font-weight:normal;color:#323130;transform:scaleX(1.0165);">Bind for Cross filter/RLS</div>
<div id="p_sf" class="t" style="left:2065.42px;top:881.67px;font-family:'Liberation Sans', sans-serif;font-size:24px;font-weight:bold;color:#323130;transform:scaleX(0.9312);">Scaling Factor <span style="color:#a80000">*</span></div>
<div id="p_auto" class="t" style="left:2088.40px;top:945.07px;font-family:'Liberation Sans', sans-serif;font-size:24px;font-weight:normal;color:#323130;transform:scaleX(1.0258);">Auto</div>
<div id="p_inct" class="t" style="left:2114.04px;top:1041.87px;font-family:'Liberation Sans', sans-serif;font-size:24px;font-weight:normal;color:#323130;transform:scaleX(1.0623);">Include in total</div>
<div id="p_incc" class="t" style="left:2114.35px;top:1142.77px;font-family:'Liberation Sans', sans-serif;font-size:24px;font-weight:normal;color:#323130;transform:scaleX(1.0255);">Include in Charts</div>
<div id="p_eval" class="t" style="left:2114.42px;top:1243.47px;font-family:'Liberation Sans', sans-serif;font-size:24px;font-weight:normal;color:#323130;transform:scaleX(0.9893);">Evaluate Columns Before Rows</div>
<div id="p_desc" class="t" style="left:2064.47px;top:1326.07px;font-family:'Liberation Sans', sans-serif;font-size:24px;font-weight:bold;color:#323130;transform:scaleX(0.9544);">Description</div>
<div id="p_close" class="t" style="left:2310.69px;top:1404.61px;font-family:'Liberation Sans', sans-serif;font-size:26px;font-weight:bold;color:#323130;transform:scaleX(0.9466);">Close</div>
<div id="p_upd" class="t" style="left:2486.65px;top:1404.61px;font-family:'Liberation Sans', sans-serif;font-size:26px;font-weight:bold;color:#fff;transform:scaleX(0.9863);">Update</div>
<div id="n0_0" class="t" style="left:501.53px;top:529.08px;font-family:'Liberation Mono', monospace;font-size:26px;font-weight:bold;color:#1f1f1f;transform:scaleX(0.8700);">1,157.37</div>
<div id="n0_1" class="t" style="left:751.53px;top:529.08px;font-family:'Liberation Mono', monospace;font-size:26px;font-weight:bold;color:#1f1f1f;transform:scaleX(0.8700);">845.31</div>
<div id="n0_2" class="t" style="left:973.68px;top:529.08px;font-family:'Liberation Mono', monospace;font-size:26px;font-weight:bold;color:#1f1f1f;transform:scaleX(0.8700);">312.06</div>
<div id="n1_0" class="t" style="left:527.81px;top:578.68px;font-family:'Liberation Mono', monospace;font-size:26px;font-weight:bold;color:#1f1f1f;transform:scaleX(0.8700);">462.54</div>
<div id="n1_1" class="t" style="left:751.53px;top:578.68px;font-family:'Liberation Mono', monospace;font-size:26px;font-weight:bold;color:#1f1f1f;transform:scaleX(0.8700);">345.96</div>
<div id="n1_2" class="t" style="left:973.81px;top:578.68px;font-family:'Liberation Mono', monospace;font-size:26px;font-weight:bold;color:#1f1f1f;transform:scaleX(0.8700);">116.58</div>
<div id="n2_0" class="t" style="left:528.68px;top:616.08px;font-family:'Liberation Mono', monospace;font-size:26px;font-weight:normal;color:#1f1f1f;transform:scaleX(0.8700);">151.70</div>
<div id="n2_1" class="t" style="left:751.53px;top:616.08px;font-family:'Liberation Mono', monospace;font-size:26px;font-weight:normal;color:#1f1f1f;transform:scaleX(0.8700);">111.53</div>
<div id="n2_2" class="t" style="left:988.25px;top:616.08px;font-family:'Liberation Mono', monospace;font-size:26px;font-weight:normal;color:#1f1f1f;transform:scaleX(0.8700);">40.18</div>
<div id="n3_0" class="t" style="left:528.81px;top:653.08px;font-family:'Liberation Mono', monospace;font-size:26px;font-weight:normal;color:#1f1f1f;transform:scaleX(0.8700);">310.84</div>
<div id="n3_1" class="t" style="left:751.53px;top:653.08px;font-family:'Liberation Mono', monospace;font-size:26px;font-weight:normal;color:#1f1f1f;transform:scaleX(0.8700);">234.43</div>
<div id="n3_2" class="t" style="left:986.38px;top:653.08px;font-family:'Liberation Mono', monospace;font-size:26px;font-weight:normal;color:#1f1f1f;transform:scaleX(0.8700);">76.41</div>
<div id="n4_0" class="t" style="left:528.68px;top:693.08px;font-family:'Liberation Mono', monospace;font-size:26px;font-weight:bold;color:#1f1f1f;transform:scaleX(0.8700);">694.82</div>
<div id="n4_1" class="t" style="left:751.53px;top:693.08px;font-family:'Liberation Mono', monospace;font-size:26px;font-weight:bold;color:#1f1f1f;transform:scaleX(0.8700);">499.35</div>
<div id="n4_2" class="t" style="left:973.68px;top:693.08px;font-family:'Liberation Mono', monospace;font-size:26px;font-weight:bold;color:#1f1f1f;transform:scaleX(0.8700);">195.47</div>
<div id="n5_0" class="t" style="left:528.68px;top:729.58px;font-family:'Liberation Mono', monospace;font-size:26px;font-weight:normal;color:#1f1f1f;transform:scaleX(0.8700);">269.50</div>
<div id="n5_1" class="t" style="left:751.53px;top:729.58px;font-family:'Liberation Mono', monospace;font-size:26px;font-weight:normal;color:#1f1f1f;transform:scaleX(0.8700);">187.45</div>
<div id="n5_2" class="t" style="left:988.25px;top:729.58px;font-family:'Liberation Mono', monospace;font-size:26px;font-weight:normal;color:#1f1f1f;transform:scaleX(0.8700);">82.05</div>
<div id="n6_0" class="t" style="left:528.68px;top:767.38px;font-family:'Liberation Mono', monospace;font-size:26px;font-weight:normal;color:#1f1f1f;transform:scaleX(0.8700);">116.60</div>
<div id="n6_1" class="t" style="left:765.10px;top:767.38px;font-family:'Liberation Mono', monospace;font-size:26px;font-weight:normal;color:#1f1f1f;transform:scaleX(0.8700);">88.32</div>
<div id="n6_2" class="t" style="left:988.25px;top:767.38px;font-family:'Liberation Mono', monospace;font-size:26px;font-weight:normal;color:#1f1f1f;transform:scaleX(0.8700);">28.28</div>
<div id="n7_0" class="t" style="left:528.68px;top:805.08px;font-family:'Liberation Mono', monospace;font-size:26px;font-weight:normal;color:#1f1f1f;transform:scaleX(0.8700);">135.13</div>
<div id="n7_1" class="t" style="left:751.53px;top:805.08px;font-family:'Liberation Mono', monospace;font-size:26px;font-weight:normal;color:#1f1f1f;transform:scaleX(0.8700);">100.71</div>
<div id="n7_2" class="t" style="left:988.25px;top:805.08px;font-family:'Liberation Mono', monospace;font-size:26px;font-weight:normal;color:#1f1f1f;transform:scaleX(0.8700);">34.42</div>
<div id="n8_0" class="t" style="left:528.68px;top:840.08px;font-family:'Liberation Mono', monospace;font-size:26px;font-weight:normal;color:#1f1f1f;transform:scaleX(0.8700);">173.59</div>
<div id="n8_1" class="t" style="left:751.40px;top:840.08px;font-family:'Liberation Mono', monospace;font-size:26px;font-weight:normal;color:#1f1f1f;transform:scaleX(0.8700);">122.87</div>
<div id="n8_2" class="t" style="left:988.25px;top:840.08px;font-family:'Liberation Mono', monospace;font-size:26px;font-weight:normal;color:#1f1f1f;transform:scaleX(0.8700);">50.72</div>
<div style="position:absolute;left:26.5px;top:863px;width:1045px;height:64px;background:#fff;"></div>
<div style="position:absolute;left:33px;top:863px;width:1028px;height:14px;background:#f4f4f4;box-sizing:border-box;border-left:2px solid #e1e1e1"></div>
<div style="position:absolute;left:393.2px;top:863px;width:1.8px;height:14px;background:#a6a6a6;"></div>
<div style="position:absolute;left:615px;top:863px;width:1.5px;height:14px;background:#e2e2e2;"></div>
<div style="position:absolute;left:838px;top:863px;width:1.5px;height:14px;background:#e2e2e2;"></div>
<div style="position:absolute;left:1060px;top:863px;width:2px;height:14px;background:#e6e6e6;"></div>
<div style="position:absolute;left:33px;top:877px;width:1028px;height:37.5px;background:#d6dee7;box-sizing:border-box;border:2px solid #0a78d4"></div>
<div style="position:absolute;left:393.2px;top:879px;width:1.8px;height:33.5px;background:#a6a6a6;"></div>
<div style="position:absolute;left:22.5px;top:859px;width:1053px;height:73.5px;background:transparent;box-sizing:border-box;border:4px solid #e01b22"></div>
<div id="l_calc" class="t" style="left:81.02px;top:880.07px;font-family:'Liberation Sans', sans-serif;font-size:24px;font-weight:normal;color:#2f2e2d;transform:scaleX(0.9919);">Pacific vs Central Var%</div>
<div id="n9_0" class="t" style="left:518.46px;top:879.08px;font-family:'Liberation Mono', monospace;font-size:26px;font-weight:normal;color:#1f1f1f;transform:scaleX(0.9561);">69.37%</div>
<div id="n9_1" class="t" style="left:741.14px;top:879.08px;font-family:'Liberation Mono', monospace;font-size:26px;font-weight:normal;color:#1f1f1f;transform:scaleX(0.9561);">22.00%</div>
<div id="n9_2" class="t" style="left:964.73px;top:879.08px;font-family:'Liberation Mono', monospace;font-size:26px;font-weight:normal;color:#1f1f1f;transform:scaleX(0.9354);">47.37%</div>
<svg style="position:absolute;left:0;top:0" width="2648" height="1486" viewBox="0 0 2648 1486"><path d="M358.5,901 L359.5,895 L371,883.8 A2.6,2.6 0 0 1 375.5,888.3 L364,899.8 Z" stroke="#333" stroke-width="1.6" fill="none" stroke-linejoin="round"/><line x1="368.5" y1="886.5" x2="372.8" y2="890.8" stroke="#333" stroke-width="1.4"/></svg>
<div style="position:absolute;left:1999px;top:87px;width:33px;height:174px;background:#f6f6f6;box-shadow:-2px 1px 3px rgba(0,0,0,0.18)"></div>
<svg style="position:absolute;left:0;top:0" width="2648" height="300"><polyline points="2010.5,161 2022.5,172.6 2010.5,184.2" stroke="#333" stroke-width="2" fill="none"/></svg>
</body></html>
